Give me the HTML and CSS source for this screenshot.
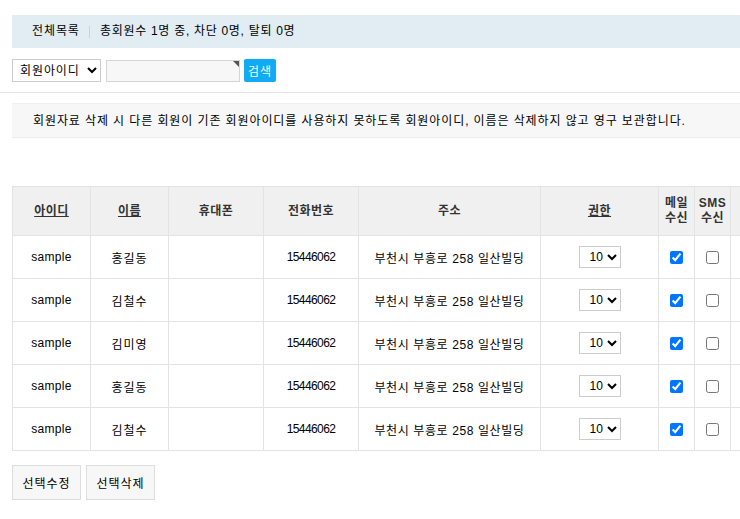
FILE: index.html
```html
<!DOCTYPE html>
<html lang="ko">

<head>
    <meta charset="UTF-8">
    <meta name="viewport" content="width=device-width, initial-scale=1.0">
    <title>회원관리</title>
    <link rel="stylesheet" href="styles.css">
</head>

<body>
    <div class="wrap">
        <div class="localOpt">
            <span class="ovLink">전체목록</span>
            <span class="ovTxt">총회원수 1명 중, 차단 0명, 탈퇴 0명</span>
        </div>

        <form class="sch">
            <select class="schSel">
                <option>회원아이디</option>
            </select>
            <span class="frmReq"><input type="text" class="frmInput"></span>
            <button type="button" class="btnSearch">검색</button>
        </form>
    </div>
    <div class="line"></div>

    <div class="wrap">
        <div class="notice">회원자료 삭제 시 다른 회원이 기존 회원아이디를 사용하지 못하도록 회원아이디, 이름은 삭제하지 않고 영구 보관합니다.</div>

        <table class="list">
            <thead>
                <tr>
                    <th class="cId"><a href="#">아이디</a></th>
                    <th class="cName"><a href="#">이름</a></th>
                    <th class="cHp">휴대폰</th>
                    <th class="cTel">전화번호</th>
                    <th class="cAddr">주소</th>
                    <th class="cLevel"><a href="#">권한</a></th>
                    <th class="cChk">메일<br>수신</th>
                    <th class="cChk">SMS<br>수신</th>
                    <th class="cEtc"></th>
                </tr>
            </thead>
            <tbody>
                <tr>
                    <td class="en">sample</td><td>홍길동</td><td></td><td class="num">15446062</td><td class="addr">부천시 부흥로 258 일산빌딩</td>
                    <td><select class="lvSel"><option>10</option></select></td>
                    <td><input type="checkbox" checked></td><td><input type="checkbox"></td><td></td>
                </tr>
                <tr>
                    <td class="en">sample</td><td>김철수</td><td></td><td class="num">15446062</td><td class="addr">부천시 부흥로 258 일산빌딩</td>
                    <td><select class="lvSel"><option>10</option></select></td>
                    <td><input type="checkbox" checked></td><td><input type="checkbox"></td><td></td>
                </tr>
                <tr>
                    <td class="en">sample</td><td>김미영</td><td></td><td class="num">15446062</td><td class="addr">부천시 부흥로 258 일산빌딩</td>
                    <td><select class="lvSel"><option>10</option></select></td>
                    <td><input type="checkbox" checked></td><td><input type="checkbox"></td><td></td>
                </tr>
                <tr>
                    <td class="en">sample</td><td>홍길동</td><td></td><td class="num">15446062</td><td class="addr">부천시 부흥로 258 일산빌딩</td>
                    <td><select class="lvSel"><option>10</option></select></td>
                    <td><input type="checkbox" checked></td><td><input type="checkbox"></td><td></td>
                </tr>
                <tr>
                    <td class="en">sample</td><td>김철수</td><td></td><td class="num">15446062</td><td class="addr">부천시 부흥로 258 일산빌딩</td>
                    <td><select class="lvSel"><option>10</option></select></td>
                    <td><input type="checkbox" checked></td><td><input type="checkbox"></td><td></td>
                </tr>
            </tbody>
        </table>

        <div class="btnList">
            <button type="button" class="btnGray">선택수정</button>
            <button type="button" class="btnGray">선택삭제</button>
        </div>
    </div>
</body>

</html>
```

FILE: styles.css
```css
* {
    margin: 0;
    padding: 0;
    box-sizing: border-box;
}

html,
body {
    background-color: #fff;
    overflow-x: hidden;
}

body {
    font-family: "Liberation Sans", "Noto Sans CJK KR", sans-serif;
    font-size: 12px;
    letter-spacing: 0.9px;
    color: #000;
}

.wrap {
    padding-left: 12px;
    width: 780px;
}

.localOpt {
    margin-top: 15px;
    height: 33px;
    line-height: 33px;
    background-color: #e1edf3;
    padding-left: 20px;
}

.ovLink {
    display: inline-block;
    padding-right: 10px;
    position: relative;
}

.ovLink::after {
    content: "";
    position: absolute;
    right: 0;
    top: 11px;
    width: 1px;
    height: 12px;
    background-color: #c9d4da;
}

.ovTxt {
    padding-left: 6px;
    letter-spacing: 0.7px;
}

.sch {
    margin-top: 11px;
    height: 23px;
    display: flex;
    align-items: center;
}

.schSel {
    width: 89px;
    height: 23px;
    border: 1px solid #ccc;
    background: #fff;
    font-family: inherit;
    font-size: 12px;
    letter-spacing: 0.9px;
    padding-left: 3px;
}

.frmReq {
    position: relative;
    margin-left: 5px;
}

.frmReq::after {
    content: "";
    position: absolute;
    right: 1px;
    top: 1px;
    border-top: 6px solid #555;
    border-left: 6px solid transparent;
}

.frmInput {
    display: block;
    width: 134px;
    height: 22px;
    border: 1px solid #d5d5d5;
    background-color: #f7f7f7;
}

.btnSearch {
    margin-left: 4px;
    width: 32px;
    height: 23px;
    border: 0;
    border-radius: 2px;
    background-color: #10aaf5;
    color: #fff;
    font-family: inherit;
    font-size: 12px;
    letter-spacing: 0.9px;
}

.line {
    margin-top: 10px;
    height: 1px;
    background-color: #e5e5e5;
}

.notice {
    margin-top: 10px;
    height: 35px;
    line-height: 35px;
    padding-left: 21px;
    background-color: #f7f7f7;
    border-top: 1px solid #f0f0f0;
    border-bottom: 1px solid #eee;
}

.list {
    margin-top: 48px;
    border-collapse: collapse;
    table-layout: fixed;
    width: 768px;
}

.list th,
.list td {
    border: 1px solid #e3e3e3;
    text-align: center;
    vertical-align: middle;
}

.list th {
    height: 49px;
    background-color: #f0f0f0;
    color: #333;
    font-weight: bold;
    font-size: 12px;
    line-height: 15px;
    letter-spacing: 0.5px;
}

.list th a {
    color: #333;
}

.list td {
    height: 43px;
}

.list td.en {
    letter-spacing: 0.3px;
}

.list td.num {
    letter-spacing: -0.6px;
}

.list td.addr {
    letter-spacing: 0.6px;
}

.cId { width: 78px; }
.cName { width: 78px; }
.cHp { width: 95px; }
.cTel { width: 95px; }
.cAddr { width: 182px; }
.cLevel { width: 118px; }
.cChk { width: 36px; }
.cEtc { width: 50px; }

.lvSel {
    width: 42px;
    height: 22px;
    border: 1px solid #ccc;
    background: #fff;
    font-family: inherit;
    font-size: 12px;
    letter-spacing: 0;
    padding-left: 6px;
}

.list input[type="checkbox"] {
    width: 13px;
    height: 13px;
    vertical-align: middle;
}

.btnList {
    margin-top: 14px;
    display: flex;
    gap: 5px;
}

.btnGray {
    width: 69px;
    height: 35px;
    border: 1px solid #ddd;
    background-color: #f7f7f7;
    font-family: inherit;
    font-size: 12px;
    letter-spacing: 0.9px;
    color: #000;
}
```
